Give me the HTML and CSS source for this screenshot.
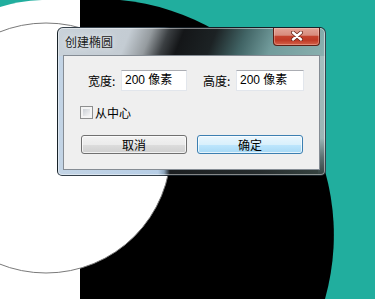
FILE: index.html
```html
<!DOCTYPE html>
<html lang="zh-CN">
<head>
<meta charset="utf-8">
<title>创建椭圆</title>
<link rel="stylesheet" href="styles.css">
</head>
<body>
<div class="stage">
  <svg class="backdrop" width="375" height="299" viewBox="0 0 375 299">
    <rect width="375" height="299" fill="#21ae9e"/>
    <path d="M0,7 Q18,1 42,0 L80,0 L80,299 L0,299 Z" fill="#ffffff"/>
    <path d="M80,0 L120,0 A236,236 0 0 1 325,299 L80,299 Z" fill="#000000"/>
    <circle cx="46" cy="148" r="125" fill="#ffffff" stroke="#7a7a7a" stroke-width="1"/>
  </svg>

  <div class="window">
    <div class="titlebar">
      <span class="title">创建椭圆</span>
      <button class="close" aria-label="关闭">
        <svg width="12" height="10" viewBox="0 0 12 10">
          <path d="M2,1.5 L10,8.5 M10,1.5 L2,8.5" stroke="#6a2418" stroke-width="4" stroke-linecap="round"/>
          <path d="M2,1.5 L10,8.5 M10,1.5 L2,8.5" stroke="#ffffff" stroke-width="2.4" stroke-linecap="round"/>
        </svg>
      </button>
    </div>
    <div class="client">
      <div class="size-row">
        <div class="field">
          <span class="label">宽度:</span>
          <span class="input">200 像素</span>
        </div>
        <div class="field">
          <span class="label">高度:</span>
          <span class="input wide">200 像素</span>
        </div>
      </div>
      <div class="check-row">
        <span class="checkbox"></span>
        <span class="check-label">从中心</span>
      </div>
      <div class="button-row">
        <button class="btn">取消</button>
        <button class="btn default">确定</button>
      </div>
    </div>
  </div>
</div>
</body>
</html>
```

FILE: styles.css
```css
html, body {
  margin: 0;
  padding: 0;
  background: #ffffff;
}

.stage {
  position: relative;
  width: 375px;
  height: 299px;
  overflow: hidden;
  font-family: "Liberation Sans", "Noto Sans CJK SC", sans-serif;
  font-size: 12px;
  color: #000;
}

.backdrop {
  position: absolute;
  left: 0;
  top: 0;
  display: block;
}

.window {
  position: absolute;
  left: 57px;
  top: 27px;
  width: 269px;
  height: 149px;
  box-sizing: border-box;
  border: 1px solid rgba(18, 28, 36, 0.8);
  border-radius: 6px 6px 5px 5px;
  display: flex;
  flex-direction: column;
  box-shadow: inset 0 0 0 1px rgba(255, 255, 255, 0.45);
  background:
    linear-gradient(112deg, #c9d2da 0px, #c4ccd3 68px, #959b9f 88px, #3b3f42 104px, #141618 118px, #1c2224 148px, #416465 176px, #729c9c 205px, #8fb4b3 269px) 0 0 / 100% 28px no-repeat,
    linear-gradient(to bottom, #a9c2c2 0%, #9ab5b5 75%, #5b7171 88%, #34413f 100%) right 0 top 0 / 7px 100% no-repeat,
    linear-gradient(to right, #c3d4e5 0px, #b7cee6 100px, #8da5bb 106px, #1b1e20 112px, #262c2d 200px, #35423f 262px);
}

.titlebar {
  position: relative;
  height: 27px;
  display: flex;
  align-items: center;
  padding-left: 7px;
}

.title {
  font-family: "Noto Sans CJK SC", sans-serif;
  font-size: 12px;
  color: #1a1a1a;
  text-shadow: 0 0 6px rgba(255, 255, 255, 0.8);
}

.close {
  position: absolute;
  top: 0;
  right: 5px;
  width: 47px;
  height: 18px;
  margin: 0;
  padding: 0;
  box-sizing: border-box;
  border: 1px solid #5c1f15;
  border-top: none;
  border-radius: 0 0 4px 4px;
  background: linear-gradient(to bottom, #e2a497 0%, #d88c7d 42%, #c4432e 50%, #bf3a26 72%, #d4634b 100%);
  box-shadow: inset 0 0 0 1px rgba(255, 220, 210, 0.35);
  display: flex;
  align-items: center;
  justify-content: center;
}

.close svg {
  display: block;
  margin-top: -1px;
}

.client {
  flex: 1;
  margin: 0 5px 5px 5px;
  border: 1px solid rgba(62, 74, 86, 0.6);
  background: #efefef;
  padding-top: 14px;
  display: flex;
  flex-direction: column;
}

.size-row {
  display: flex;
  gap: 16px;
  padding-left: 24px;
  height: 21px;
}

.field {
  display: flex;
  align-items: center;
  gap: 3px;
}

.label {
  width: 30px;
  font-family: "Noto Sans CJK SC", sans-serif;
  white-space: nowrap;
}

.input {
  box-sizing: border-box;
  width: 66px;
  height: 21px;
  padding-left: 3px;
  line-height: 19px;
  background: #ffffff;
  border: 1px solid #e2e6ec;
  border-top-color: #abadb3;
  white-space: nowrap;
}

.input.wide {
  width: 68px;
}

.check-row {
  margin-top: 15px;
  padding-left: 16px;
  height: 13px;
  display: flex;
  align-items: center;
  gap: 2px;
}

.checkbox {
  box-sizing: border-box;
  width: 13px;
  height: 13px;
  border: 1px solid #8e8f8f;
  background:
    linear-gradient(135deg, #cbcfd5 0%, #f6f6f6 100%) 2px 2px / 7px 7px no-repeat,
    #f4f4f4;
}

.check-label {
  font-family: "Noto Sans CJK SC", sans-serif;
  line-height: 13px;
}

.button-row {
  margin-top: 16px;
  padding-left: 17px;
  display: flex;
  gap: 10px;
}

.btn {
  box-sizing: border-box;
  width: 106px;
  height: 19px;
  margin: 0;
  padding: 0;
  font-family: "Noto Sans CJK SC", sans-serif;
  font-size: 12px;
  line-height: 17px;
  color: #000;
  border: 1px solid #707070;
  border-radius: 3px;
  background: linear-gradient(to bottom, #f2f2f2 0%, #ebebeb 50%, #dddddd 51%, #cfcfcf 100%);
  box-shadow: inset 0 0 0 1px rgba(255, 255, 255, 0.7);
}

.btn.default {
  border-color: #3c7fb1;
  background: linear-gradient(to bottom, #eaf6fd 0%, #d9f0fc 50%, #bee6fd 51%, #a7d9f5 100%);
}
```
